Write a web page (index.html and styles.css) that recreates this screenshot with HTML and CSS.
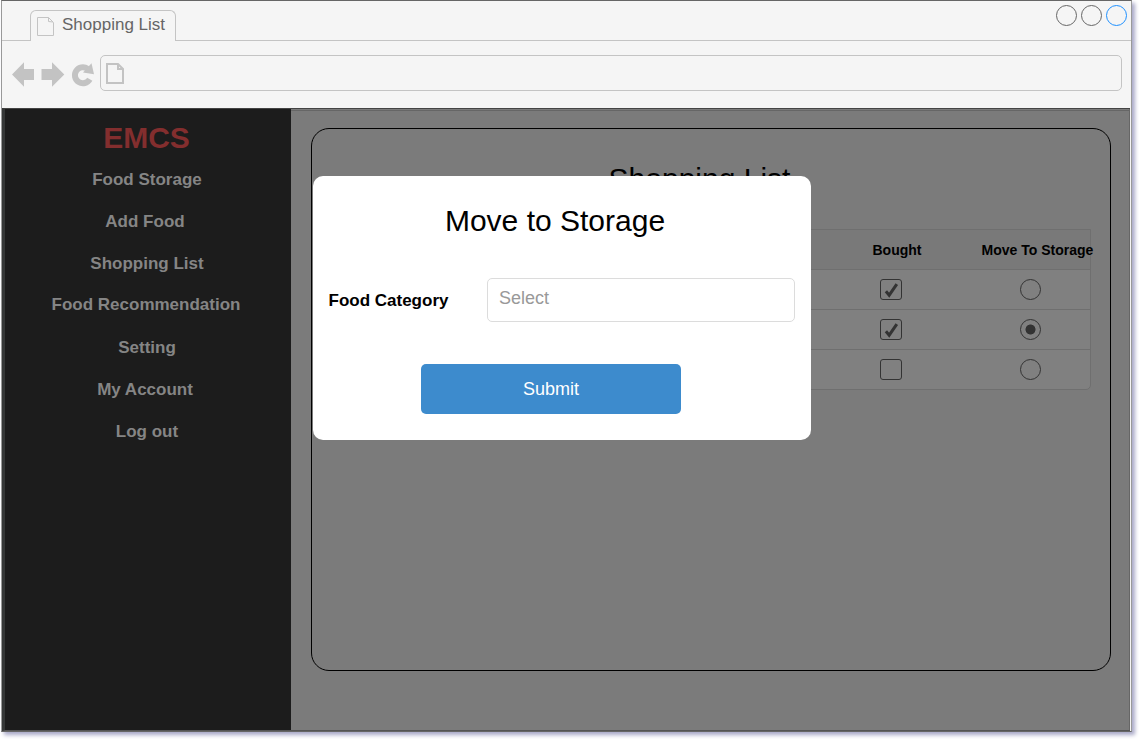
FILE: index.html
```html
<!DOCTYPE html>
<html lang="en">
<head>
<meta charset="utf-8">
<title>Shopping List</title>
<link rel="stylesheet" href="styles.css">
</head>
<body>
<div class="window">
  <header class="tabs">
    <div class="tab">
      <svg class="tab-icon" width="17" height="20" viewBox="0 0 17 20" fill="none" stroke="#c4c4c4"><path d="M.5 .5H11.5L16.5 5.5V18.5H.5ZM11.5 .5V4.5L16 5"/></svg>
      <span>Shopping List</span>
    </div>
    <div class="controls"><i class="dot"></i><i class="dot"></i><i class="dot blue"></i></div>
  </header>
  <div class="toolbar">
    <svg class="nav-icons" width="86" height="26" viewBox="0 0 86 26" fill="#c3c3c3">
      <path d="M0 12.5L12 .3V7H22V18H12V24.7Z"/>
      <path d="M29.5 7H40V.3L52.3 12.5L40 24.7V18H29.5Z"/>
      <path d="M77.8 17.3A8 8 0 1 1 75.5 6.7" fill="none" stroke="#c3c3c3" stroke-width="6"/>
      <path d="M79.5 1.2L82 12.3L71 10.5Z"/>
    </svg>
    <div class="address"><svg width="18" height="21" viewBox="0 0 18 21" fill="none" stroke="#c3c3c3" stroke-width="2"><path d="M1 1H12L17 6V20H1ZM12 1V6H17"/></svg></div>
  </div>
  <div class="page">
    <nav class="sidebar">
      <div class="brand">EMCS</div>
      <a>Food Storage</a>
      <a class="left">Add Food</a>
      <a>Shopping List</a>
      <a class="tight">Food Recommendation</a>
      <a>Setting</a>
      <a class="left">My Account</a>
      <a>Log out</a>
    </nav>
    <main class="content">
      <section class="panel">
        <h1>Shopping List</h1>
        <div class="table">
          <div class="row head"><span></span><b>Bought</b><b class="move">Move To Storage</b></div>
          <div class="row"><span></span><i class="check"><svg width="20" height="20" viewBox="0 0 20 20"><path d="M4.9 11.2L8.2 15.2L15.8 4.2" fill="none" stroke="#333" stroke-width="3"/></svg></i><i class="radio"></i></div>
          <div class="row"><span></span><i class="check"><svg width="20" height="20" viewBox="0 0 20 20"><path d="M4.9 11.2L8.2 15.2L15.8 4.2" fill="none" stroke="#333" stroke-width="3"/></svg></i><i class="radio on"></i></div>
          <div class="row"><span></span><i class="check"></i><i class="radio"></i></div>
        </div>
      </section>
    </main>
  </div>
  <div class="modal">
    <h2>Move to Storage</h2>
    <div class="field"><label>Food Category</label><div class="select">Select</div></div>
    <div class="submit">Submit</div>
  </div>
</div>
</body>
</html>
```
FILE: styles.css
```css
* { box-sizing: border-box; }
body { margin: 0; min-height: 739px; background: #fff; font-family: "Liberation Sans", Arial, sans-serif; }
.window {
  position: relative;
  width: 1131px;
  height: 732px;
  margin-left: 1px;
  background: #f5f5f5;
  border: 1px solid #666;
  border-left-color: #999;
  border-right-color: #999;
  box-shadow: 3px 3px 4px #a9a9c8;
}
.tabs { height: 40px; border-bottom: 1px solid #c4c4c4; display: flex; justify-content: space-between; }
.tab {
  margin: 9px 0 0 28px;
  width: 146px;
  height: 31px;
  border: 1px solid #c4c4c4;
  border-bottom: 0;
  border-radius: 6px 6px 0 0;
  background: #f5f5f5;
  display: flex;
  color: #666;
  font-size: 17px;
  line-height: 28px;
  white-space: nowrap;
}
.tab-icon { flex: none; margin: 6px 8px 0 6px; }
.controls { display: flex; gap: 4px; padding: 4px 4px 0 0; }
.dot { width: 21px; height: 21px; border: 1px solid #666; border-radius: 50%; }
.dot.blue { border-color: #1e90ff; }
.toolbar { height: 67px; display: flex; padding: 14px 9px 0 10px; }
.nav-icons { margin-top: 7px; flex: none; }
.address { margin-left: 2px; flex: 1; height: 36px; border: 1px solid #c4c4c4; border-radius: 5px; padding: 7px 5px; }
.address svg { display: block; }
.page {
  height: 623px;
  margin-right: 1px;
  border-top: 1px solid #444;
  border-left: 3px solid #353737;
  border-bottom: 1px solid #555;
  display: flex;
}
.sidebar {
  width: 286px;
  background: #1c1c1c;
  color: #858585;
  font-weight: bold;
  font-size: 17px;
  text-align: center;
  display: flex;
  flex-direction: column;
  padding: 12px 3px 0 1px;
}
.brand { color: #832e2e; font-size: 30px; line-height: 34px; margin-bottom: 4px; padding-right: 1px; }
.sidebar a { line-height: 42px; height: 42px; }
.sidebar .left { padding-right: 4px; }
.sidebar .tight { line-height: 40px; padding-right: 2px; }
.content { flex: 1; background: #7b7b7b; border-right: 1px solid #666; padding: 1px 18px 0 0; }
.content::before { content: ""; display: block; height: 1px; margin-right: -18px; background: #666; }
.panel { height: 543px; margin: 17px 0 0 20px; border: 1px solid #000; border-radius: 18px; padding: 0 19px; }
h1 { margin: 32px 0 0; padding-right: 23px; font-size: 30px; font-weight: normal; line-height: 36px; text-align: center; }
.table { margin-top: 32px; border: 1px solid #6f6f6f; border-radius: 0 0 5px 5px; background: #808080; }
.row { display: grid; grid-template-columns: 1fr 140px 120px; align-items: center; height: 40px; }
.row + .row { border-top: 1px solid #6f6f6f; }
.row > * { justify-self: center; }
.row > :nth-child(2) { margin-right: 18px; }
.head { height: 39px; background: #797979; font-size: 14px; white-space: nowrap; }
.row.head b:nth-child(2) { margin-right: 6px; }
.row .move { margin-right: -15px; }
.check { width: 22px; height: 21px; border: 1px solid #333; border-radius: 3px; }
.check svg { display: block; }
.radio { width: 21px; height: 21px; border: 1px solid #333; border-radius: 50%; }
.radio.on { background: radial-gradient(circle, #333 4.6px, transparent 5.4px); }
.modal {
  position: absolute;
  left: 311px;
  top: 175px;
  width: 498px;
  height: 264px;
  border-radius: 10px;
  background: #fff;
}
h2 { margin: 27px 0 0; padding-right: 14px; font-size: 30px; line-height: 36px; font-weight: normal; text-align: center; }
.field { display: flex; margin: 39px 16px 0 15.5px; justify-content: space-between; font-size: 17px; font-weight: bold; line-height: 46px; height: 44px; }
.select { width: 308px; height: 44px; border: 1px solid #dcdcdc; border-radius: 5px; padding-left: 11px; font-size: 18px; font-weight: normal; color: #999; line-height: 38px; }
.submit { width: 260px; height: 50px; margin: 42px 0 0 108px; background: #3d8bcd; border-radius: 5px; color: #fff; font-size: 18px; line-height: 51px; text-align: center; }
```
